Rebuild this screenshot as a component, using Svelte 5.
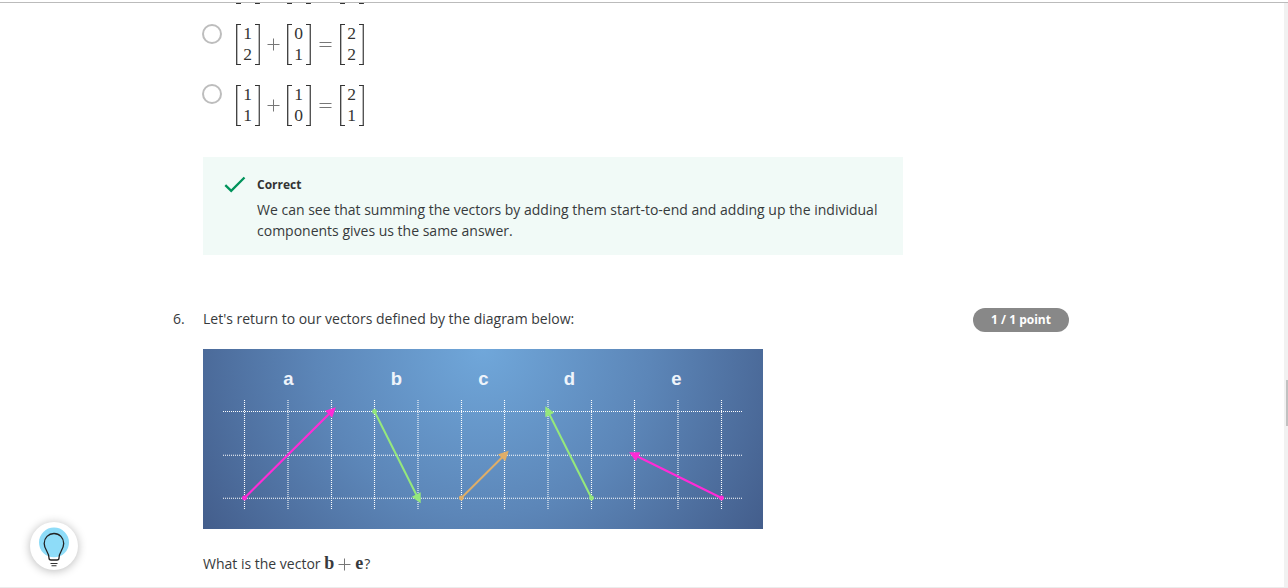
<script>
  const options = [
    { mats: [['', ''], ['', ''], ['', '']], clipped: true },
    { mats: [[1, 2], [0, 1], [2, 2]] },
    { mats: [[1, 1], [1, 0], [2, 1]] }
  ];
  const columns = [41.5, 85, 128.5, 171.5, 215, 258.5, 301.5, 345, 388.5, 431.5, 475, 518.5];
  const vectors = [
    { name: 'a', lx: 85.5, from: [41.5, 149], to: [128.5, 62.5], color: '#ff2bd6', w: 2.2 },
    { name: 'b', lx: 193.5, from: [171.5, 62.5], to: [215, 149], color: '#95e87c', w: 2 },
    { name: 'c', lx: 280.5, from: [258.3, 149], to: [301.5, 106], color: '#dfae68', w: 2 },
    { name: 'd', lx: 366.5, from: [388.5, 149], to: [345, 62.5], color: '#95e87c', w: 2 },
    { name: 'e', lx: 473.5, from: [518.5, 149], to: [431.5, 106], color: '#ff2bd6', w: 2.2 }
  ];
  const angle = (v) => (Math.atan2(v.to[1] - v.from[1], v.to[0] - v.from[0]) * 180) / Math.PI;
</script>

<div class="window">
  <div class="topline"></div>
  <div class="body">
    <main>
      <div class="options">
        {#each options as o}
          <div class="option" class:clipped={o.clipped}>
            <span class="radio"></span>
            <div class="equation">
              {#each o.mats as m, i}
                {#if i > 0}
                  <svg class="op" class:eq={i === 2} width="13" height="13" viewBox="0 0 13 13">
                    {#if i === 1}
                      <path d="M.5 6.5h12M6.5.5v12" />
                    {:else}
                      <path d="M.5 4.5h12M.5 8.5h12" />
                    {/if}
                  </svg>
                {/if}
                <div class="matrix">
                  <i class="bracket left"></i>
                  <div class="cells"><span>{m[0]}</span><span>{m[1]}</span></div>
                  <i class="bracket right"></i>
                </div>
              {/each}
            </div>
          </div>
        {/each}
      </div>

      <section class="feedback">
        <svg width="22" height="18" viewBox="0 0 22 18"><path d="M1.3 9.1 7.2 14.9 20.5 1.500" /></svg>
        <div>
          <h4>Correct</h4>
          <p>We can see that summing the vectors by adding them start-to-end and adding up the individual components gives us the same answer.</p>
        </div>
      </section>

      <section class="question">
        <span class="number">6.</span>
        <div class="content">
          <p class="prompt">Let's return to our vectors defined by the diagram below:</p>
          <svg class="diagram" width="560" height="180" viewBox="0 0 560 180">
            <defs>
              <radialGradient id="sky" gradientUnits="userSpaceOnUse" cx="280" cy="0" r="335">
                <stop offset="0" stop-color="#70a7da" />
                <stop offset=".5" stop-color="#5c86b8" />
                <stop offset="1" stop-color="#435d8b" />
              </radialGradient>
            </defs>
            <rect width="560" height="180" fill="url(#sky)" />
            {#each columns as x}
              <line class="grid" x1={x} y1="51" x2={x} y2="160" />
            {/each}
            {#each [62.5, 106.2, 149.2] as y}
              <line class="grid" x1="20" y1={y} x2="539" y2={y} />
            {/each}
            {#each vectors as v}
              <text x={v.lx} y="36">{v.name}</text>
              <line x1={v.from[0]} y1={v.from[1]} x2={v.to[0]} y2={v.to[1]} stroke={v.color} stroke-width={v.w} />
              <circle cx={v.from[0]} cy={v.from[1]} r="2.4" fill={v.color} />
              <path d="M6 0-4-5V5Z" fill={v.color} transform="translate({v.to[0]} {v.to[1]}) rotate({angle(v)})" />
            {/each}
          </svg>
          <p class="ask">What is the vector <b>b</b><svg class="plus" width="13" height="13" viewBox="0 0 13 13"><path d="M.5 6.5h12M6.5.5v12" /></svg><b class="e">e</b>?</p>
        </div>
        <span class="points">1 / 1 point</span>
      </section>
    </main>
    <div class="scroll"><div class="thumb"></div></div>
  </div>

  <button class="hint" aria-label="Hint">
    <svg width="48" height="48" viewBox="0 0 48 48">
      <circle cx="24" cy="20.5" r="15" fill="#8edcf8" />
      <path d="M19 35.5h10v2H19z" fill="#fff" />
      <path d="M19 36c0-6-4.8-8.500-4.800-14.600C14.200 15.800 18.500 11.500 24 11.500s9.700 4.300 9.700 9.900C33.700 27.500 29 30 29 36q0 2-2 2H21q-2 0-2-2" fill="none" stroke="#222" stroke-width="1.3" />
      <path d="M20.500 41.500h7M21.500 43.800h5" stroke="#333" stroke-width="1.100" />
    </svg>
  </button>
</div>

<style>
  :global(body) { background: #fff; overflow: hidden; }
  .window { width: 1288px; height: 588px; box-sizing: border-box; padding-top: 2px; overflow: hidden; position: relative; border-bottom: 1px solid #ececec; font-family: "Open Sans", sans-serif; font-size: 14px; line-height: 21px; color: #373a3c; }
  .topline { height: 1px; background: #bbb; }
  .body { display: flex; height: 584px; }
  main { flex: 1; overflow: hidden; }
  p, h4 { margin: 0; }
  .options { padding-left: 202px; }
  .option { display: flex; height: 61px; align-items: flex-start; }
  .option.clipped { height: 21px; }
  .option.clipped .equation { margin-top: -40px; }
  .option.clipped .radio, .option.clipped .op { visibility: hidden; }
  .radio { width: 16px; height: 16px; border: 2px solid #bdbdbd; border-radius: 50%; }
  .option:last-child .radio { margin-top: -1px; }
  .equation { display: flex; align-items: center; margin-left: 14px; height: 41px; }
  .matrix { display: flex; width: 24px; height: 41px; justify-content: space-between; }
  .bracket { width: 4px; border: 1px solid #333; }
  .left { border-right: 0; border-left: 1.5px solid #444; box-shadow: inset 1px 0 #bbb; }
  .right { border-left: 0; border-right-color: #555; box-shadow: inset -1px 0 #bbb; }
  .cells { font: 17.5px/21px "Liberation Serif", serif; color: #333; display: flex; flex-direction: column; margin: -1px 1px 0 0; }
  .op { margin: 0 7px; flex: none; }
  .op.eq { margin: 0 8px; }
  .op path, .plus path { stroke: #777; stroke-width: 1; fill: none; }
  .feedback { width: 700px; height: 98px; box-sizing: border-box; margin: 11px 0 0 203px; padding: 17px 20px 0 21px; display: flex; gap: 11px; background: #f1faf7; }
  .feedback > svg { margin-top: 2px; flex: none; }
  .feedback path { fill: none; stroke: #00935b; stroke-width: 2.3; }
  h4 { font-size: 12px; line-height: 21px; font-weight: 700; color: #333; }
  .feedback p { margin-top: 4px; }
  .question { display: flex; align-items: flex-start; margin: 53px 0 0 173px; }
  .number { width: 30px; }
  .content { width: 770px; }
  .diagram { display: block; margin-top: 20px; }
  .grid { stroke: #fff; stroke-opacity: 1; stroke-width: 1.1; stroke-dasharray: 1 1; }
  .diagram text { fill: #eef4fb; font: 700 18.5px "Liberation Sans", sans-serif; text-anchor: middle; }
  .ask { margin-top: 24px; }
  .ask b { display: inline-block; font: 700 18px/17px "Liberation Serif", serif; }
  .ask .e { width: 9px; }
  .plus { margin: 0 4px 0 4px; vertical-align: -2px; }
  .points { width: 96px; height: 24px; border-radius: 12px; background: #888; color: #fff; font-size: 12px; font-weight: 700; line-height: 24px; text-align: center; }
  .scroll { width: 4px; background: #f1f1f1; }
  .thumb { width: 2px; height: 46px; margin: 377px 0 0 2px; background: #c1c1c1; }
  .hint { position: absolute; left: 30px; top: 522px; width: 48px; height: 48px; padding: 0; border: 0; border-radius: 50%; background: #fff; box-shadow: 0 1px 10px rgba(0, 0, 0, .28); }
  .hint svg { display: block; }
</style>
